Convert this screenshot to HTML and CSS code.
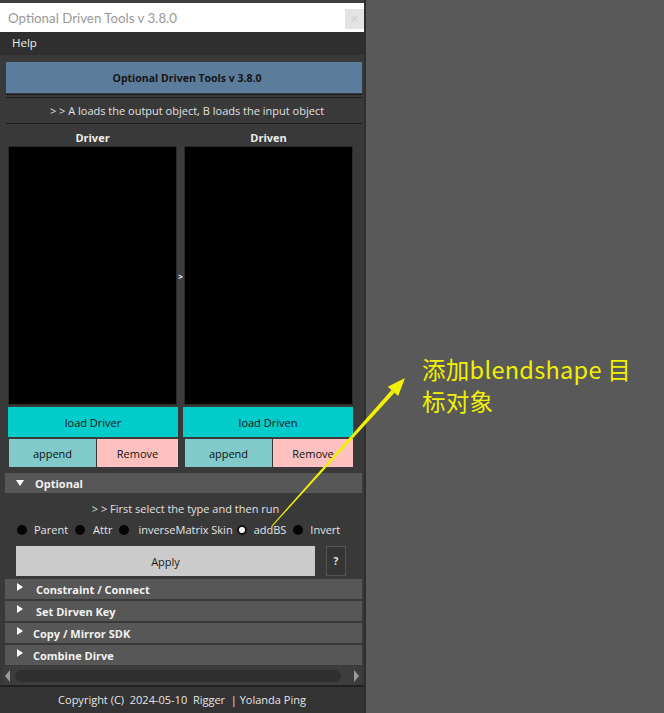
FILE: index.html
```html
<!DOCTYPE html>
<html>
<head>
<meta charset="utf-8">
<link rel="stylesheet" href="styles.css">
</head>
<body>
<div class="stage">
  <div class="window">
    <div class="topstrip"></div>
    <div class="titlebar">
      <span class="title">Optional Driven Tools v 3.8.0</span>
      <span class="close">×</span>
    </div>
    <div class="menubar"><span class="menu-item">Help</span></div>
    <div class="content">
      <div class="banner">Optional Driven Tools v 3.8.0</div>
      <div class="sep-double"></div>
      <div class="hint">&gt; &gt; A loads the output object, B loads the input object</div>
      <div class="sep"></div>
      <div class="lists">
        <div class="col-label">Driver</div>
        <div class="col-label right">Driven</div>
        <div class="listbox"></div>
        <div class="divider"><span class="div-arrow">&gt;</span></div>
        <div class="listbox right"></div>
        <div class="btn load">load Driver</div>
        <div class="btn load right">load Driven</div>
        <div class="btn-row">
          <div class="btn append">append</div>
          <div class="btn remove">Remove</div>
        </div>
        <div class="btn-row right">
          <div class="btn append">append</div>
          <div class="btn remove">Remove</div>
        </div>
      </div>

      <div class="frame-head open"><span class="tri-down"></span><span class="frame-title">Optional</span></div>
      <div class="frame-body">
        <div class="hint2">&gt; &gt; First select the type and then run</div>
        <div class="radios">
          <div class="radio"><span class="dot"></span><span>Parent</span></div>
          <div class="radio"><span class="dot"></span><span>Attr</span></div>
          <div class="radio"><span class="dot"></span><span>inverseMatrix Skin</span></div>
          <div class="radio"><span class="dot on"></span><span>addBS</span></div>
          <div class="radio"><span class="dot"></span><span>Invert</span></div>
        </div>
        <div class="apply-row">
          <div class="btn apply">Apply</div>
          <div class="btn help">?</div>
        </div>
      </div>
      <div class="frame-head"><span class="tri-right"></span><span class="frame-title indent">Constraint / Connect</span></div>
      <div class="frame-head"><span class="tri-right"></span><span class="frame-title indent">Set Dirven Key</span></div>
      <div class="frame-head"><span class="tri-right"></span><span class="frame-title">Copy / Mirror SDK</span></div>
      <div class="frame-head"><span class="tri-right"></span><span class="frame-title">Combine Dirve</span></div>
    </div>
    <div class="hscroll">
      <span class="arrow-left"></span>
      <span class="trough"></span>
      <span class="arrow-right"></span>
    </div>
    <div class="footer">Copyright (C)  2024-05-10  Rigger  | Yolanda Ping</div>
  </div>

  <div class="note">添加blendshape 目<br>标对象</div>
  <svg class="pointer" width="664" height="713" viewBox="0 0 664 713">
    <polygon points="271.6,525.7 272.4,526.3 394.5,392.7 391.5,390.1" fill="#f2f200"/>
    <polygon points="405,378 398.2,396.1 387.8,386.7" fill="#f2f200"/>
  </svg>
</div>
</body>
</html>
```

FILE: styles.css
```css
* { box-sizing: border-box; }
html, body { margin: 0; padding: 0; }
body {
  background: #595959;
  font-family: "Open Sans", "Noto Sans", sans-serif;
  font-size: 11px;
  color: #dddddd;
}
.stage {
  position: relative;
  width: 664px;
  height: 713px;
  overflow: hidden;
}
.window {
  width: 366px;
  height: 713px;
  background: #393939;
  border-right: 2px solid #2f2f2f;
  display: flex;
  flex-direction: column;
}
.window > * { flex-shrink: 0; }
.topstrip {
  height: 3px;
  background: #3e3e3e;
}
.titlebar {
  height: 29px;
  background: #ffffff;
  display: flex;
  align-items: center;
  justify-content: space-between;
  padding-left: 8px;
}
.title {
  font-family: Lato, "Open Sans", sans-serif;
  font-size: 13.3px;
  color: #9a9a9a;
}
.close {
  width: 19px;
  height: 20px;
  margin-top: 3px;
  background: #e4e4e4;
  color: #cfcfcf;
  font-size: 14px;
  line-height: 20px;
  text-align: center;
}
.menubar {
  height: 23px;
  background: #2f2f2f;
  display: flex;
  align-items: center;
  padding-left: 12px;
  padding-bottom: 3px;
}
.menu-item {
  color: #f0f0f0;
  font-size: 11.5px;
}
.content {
  flex: 1 0 auto;
  display: flex;
  flex-direction: column;
}
.content > * { flex-shrink: 0; }
.banner {
  margin: 7px 2px 0 6px;
  height: 31px;
  background: #5b7c9a;
  color: #151515;
  font-weight: bold;
  font-size: 10.5px;
  display: flex;
  align-items: center;
  justify-content: center;
  padding-left: 6px;
}
.sep-double {
  margin: 1px 2px 0 6px;
  height: 4px;
  border-top: 1px solid #1c1c1c;
  border-bottom: 1px solid #1c1c1c;
}
.hint {
  height: 25px;
  display: flex;
  align-items: center;
  justify-content: center;
  color: #e0e0e0;
  padding-left: 10px;
}
.sep {
  margin: 0 2px 0 6px;
  height: 1px;
  background: #1c1c1c;
}
.lists {
  margin: 6px 0 0 8px;
  display: grid;
  grid-template-columns: 169px 7px 169px;
  grid-template-rows: 16px 259px 32px 30px;
}
.col-label {
  grid-column: 1;
  grid-row: 1;
  text-align: center;
  font-weight: bold;
  color: #eeeeee;
  line-height: 16px;
}
.col-label.right { grid-column: 3; }
.listbox {
  grid-column: 1;
  grid-row: 2;
  background: #000000;
  border: 1px solid #2a2a2a;
}
.listbox.right { grid-column: 3; }
.divider {
  grid-column: 2;
  grid-row: 2;
  background: #3c3c3c;
  display: flex;
  align-items: center;
  justify-content: center;
}
.div-arrow {
  font-size: 8px;
  color: #f0f0f0;
  font-weight: bold;
  margin-top: 2px;
}
.btn {
  display: flex;
  align-items: center;
  justify-content: center;
  color: #111111;
  font-size: 11px;
}
.load {
  grid-column: 1 / span 2;
  grid-row: 3;
  width: 170px;
  height: 30px;
  align-self: end;
  justify-self: start;
  background: #00cccc;
}
.load.right {
  grid-column: 2 / span 2;
  width: 170px;
  justify-self: end;
}
.btn-row {
  grid-column: 1 / span 2;
  grid-row: 4;
  width: 170px;
  height: 28px;
  align-self: end;
  justify-self: start;
  display: flex;
  padding-left: 1px;
}
.btn-row.right {
  grid-column: 3;
  width: 169px;
  justify-self: end;
}
.append {
  width: 87px;
  background: #80caca;
}
.remove {
  flex: 1;
  background: #ffc0c0;
  margin-left: 1px;
}
.frame-head {
  margin: 6px 2px 0 5px;
  height: 20px;
  background: #575757;
  display: flex;
  align-items: center;
}
.frame-head + .frame-head { margin-top: 2px; }
.frame-body + .frame-head { margin-top: 3px; }
.tri-down {
  margin-left: 11px;
  width: 0; height: 0;
  border-left: 4px solid transparent;
  border-right: 4px solid transparent;
  border-top: 6px solid #ffffff;
}
.tri-right {
  margin-left: 12px;
  margin-top: -4px;
  width: 0; height: 0;
  border-top: 4px solid transparent;
  border-bottom: 4px solid transparent;
  border-left: 6px solid #ffffff;
}
.frame-title {
  margin-left: 11px;
  font-weight: bold;
  color: #f2f2f2;
  font-size: 11px;
}
.tri-right + .frame-title { margin-left: 10px; }
.tri-right + .frame-title.indent { margin-left: 13px; }
.frame-body {
  display: flex;
  flex-direction: column;
}
.hint2 {
  height: 20px;
  margin-top: 5px;
  display: flex;
  align-items: center;
  justify-content: center;
  padding-left: 7px;
  color: #e0e0e0;
}
.radios {
  height: 21px;
  margin-top: 1px;
  display: flex;
  align-items: center;
  padding-left: 17px;
  gap: 7px;
}
.radio {
  display: flex;
  align-items: center;
  gap: 7px;
  color: #e4e4e4;
}
.radio:nth-child(2) span:last-child { margin-left: 1px; }
.radio:nth-child(3) span:last-child { margin-left: 2px; }
.radio:nth-child(4) { margin-left: -3px; }
.dot {
  width: 10px;
  height: 10px;
  border-radius: 50%;
  background: #050505;
}
.dot.on {
  background: #ffffff;
  border: 2px solid #111111;
}
.apply-row {
  margin-top: 6px;
  display: flex;
  padding-left: 16px;
  height: 30px;
}
.apply {
  width: 299px;
  background: #cbcbcb;
  color: #1a1a1a;
}
.help {
  margin-left: 11px;
  width: 20px;
  border: 1px solid #555555;
  background: #353535;
  color: #e8e8e8;
  font-size: 10px;
  font-weight: bold;
}
.hscroll {
  height: 19px;
  margin: 0 2px 0 3px;
  background: #3d3d3d;
  display: flex;
  align-items: center;
  padding: 0 3px 0 2px;
}
.arrow-left {
  width: 0; height: 0;
  border-top: 6px solid transparent;
  border-bottom: 6px solid transparent;
  border-right: 5px solid #9a9a9a;
}
.trough {
  margin-left: 5px;
  width: 328px;
  height: 12px;
  border-radius: 6px;
  background: #2f2f2f;
}
.arrow-right {
  margin-left: 13px;
  width: 0; height: 0;
  border-top: 6px solid transparent;
  border-bottom: 6px solid transparent;
  border-left: 5px solid #9a9a9a;
}
.footer {
  flex: 0 0 28px;
  border-top: 2px solid #222222;
  background: #333333;
  display: flex;
  align-items: center;
  justify-content: center;
  white-space: pre;
  color: #e6e6e6;
  font-size: 11px;
  padding-bottom: 1px;
}
.note {
  position: absolute;
  left: 422px;
  top: 353px;
  font-family: "Noto Sans CJK SC", sans-serif;
  font-size: 23.5px;
  letter-spacing: 0.3px;
  line-height: 32px;
  color: #f0f000;
}
.pointer {
  position: absolute;
  left: 0;
  top: 0;
}
```
